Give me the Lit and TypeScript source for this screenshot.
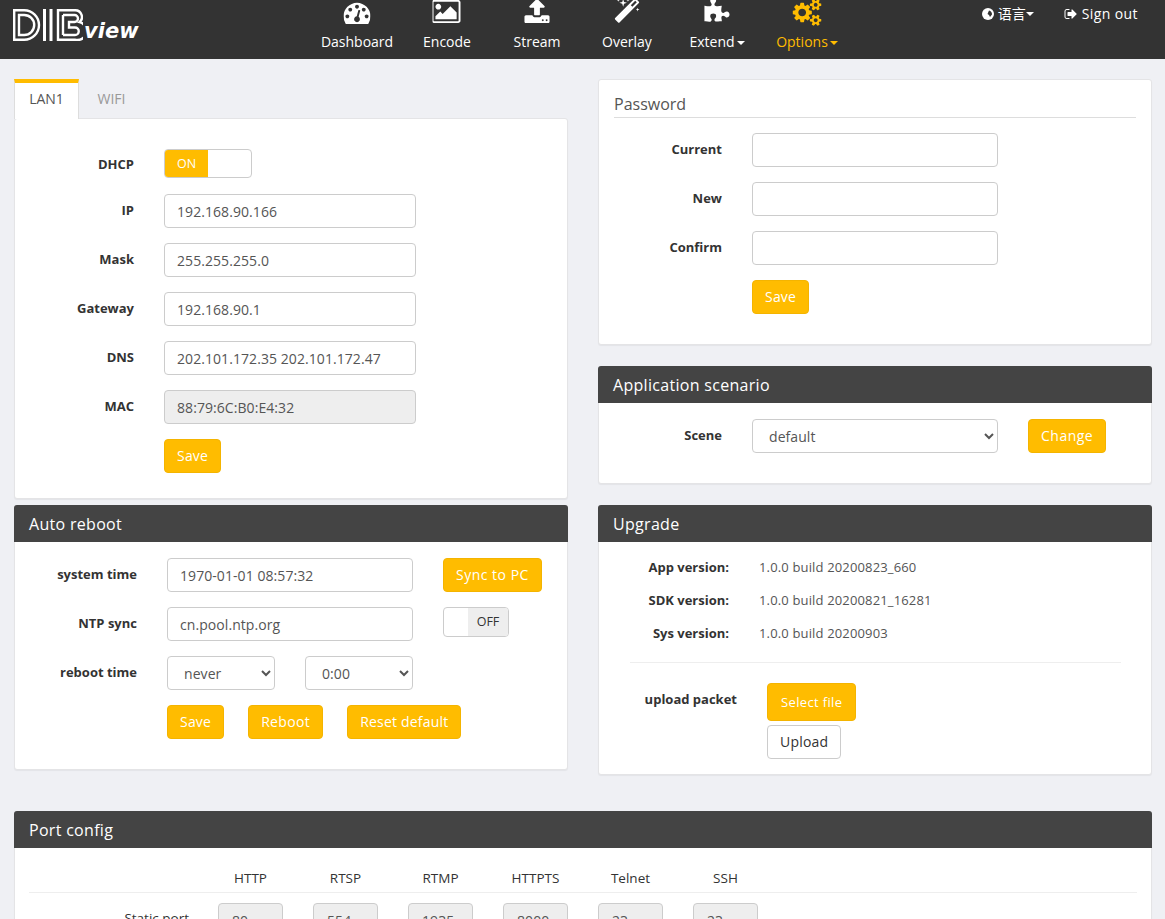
import {LitElement, css, html, svg} from 'lit';
import {customElement} from 'lit/decorators.js';

const ICONS = {
  dashboard: 'M384 1152q0-53-37.5-90.5t-90.5-37.5-90.5 37.5-37.5 90.5 37.5 90.5 90.5 37.5 90.5-37.5 37.5-90.5zm192-448q0-53-37.5-90.5t-90.5-37.5-90.5 37.5-37.5 90.5 37.5 90.5 90.5 37.5 90.5-37.5 37.5-90.5zm428 481l101-382q6-26-7.5-48.5t-38.5-29.5-48 6.5-30 39.5l-101 382q-60 5-107 43.5t-63 98.5q-20 77 20 146t117 89 146-20 89-117q16-60-6-117t-72-91zm660-33q0-53-37.5-90.5t-90.5-37.5-90.5 37.5-37.5 90.5 37.5 90.5 90.5 37.5 90.5-37.5 37.5-90.5zm-640-640q0-53-37.5-90.5t-90.5-37.5-90.5 37.5-37.5 90.5 37.5 90.5 90.5 37.5 90.5-37.5 37.5-90.5zm448 192q0-53-37.5-90.5t-90.5-37.5-90.5 37.5-37.5 90.5 37.5 90.5 90.5 37.5 90.5-37.5 37.5-90.5zm320 448q0 261-141 483-19 29-54 29h-1402q-35 0-54-29-141-221-141-483 0-182 71-348t191-286 286-191 348-71 348 71 286 191 191 286 71 348z',
  encode: 'M576 576q0 80-56 136t-136 56-136-56-56-136 56-136 136-56 136 56 56 136zm1024 384v448h-1408v-192l320-320 160 160 512-512zm96-704h-1600q-13 0-22.5 9.5t-9.5 22.5v1216q0 13 9.5 22.5t22.5 9.5h1600q13 0 22.5-9.5t9.5-22.5v-1216q0-13-9.5-22.5t-22.5-9.5zm160 32v1216q0 66-47 113t-113 47h-1600q-66 0-113-47t-47-113v-1216q0-66 47-113t113-47h1600q66 0 113 47t47 113z',
  stream: 'M1344 1472q0-26-19-45t-45-19-45 19-19 45 19 45 45 19 45-19 19-45zm256 0q0-26-19-45t-45-19-45 19-19 45 19 45 45 19 45-19 19-45zm128-224v320q0 40-28 68t-68 28h-1472q-40 0-68-28t-28-68v-320q0-40 28-68t68-28h427q21 56 70.5 92t110.5 36h256q61 0 110.5-36t70.5-92h427q40 0 68 28t28 68zm-325-648q-17 40-59 40h-256v448q0 26-19 45t-45 19h-256q-26 0-45-19t-19-45v-448h-256q-42 0-59-40-17-39 14-69l448-448q18-19 45-19t45 19l448 448q31 30 14 69z',
  overlay: 'M1254 581l293-293-107-107-293 293zm447-293q0 27-18 45l-1286 1286q-18 18-45 18t-45-18l-198-198q-18-18-18-45t18-45l1286-1286q18-18 45-18t45 18l198 198q18 18 18 45zm-1351-190l98 30-98 30-30 98-30-98-98-30 98-30 30-98zm350 162l196 60-196 60-60 196-60-196-196-60 196-60 60-196zm930 478l98 30-98 30-30 98-30-98-98-30 98-30 30-98zm-640-640l98 30-98 30-30 98-30-98-98-30 98-30 30-98z',
  extend: 'M1728 1098q0 81-44.5 135t-123.5 54q-41 0-77.5-17.5t-59-38-56.5-38-71-17.5q-110 0-110 124 0 39 16 115t15 115v5q-22 0-33 1-34 3-97.5 11.5t-115.5 13.5-98 5q-61 0-103-26.5t-42-83.5q0-37 17.5-71t38-56.5 38-59 17.5-77.5q0-79-54-123.5t-135-44.5q-84 0-143 45.5t-59 127.5q0 43 15 83t33.5 64.5 33.5 53 15 50.5q0 45-46 89-37 35-117 35-95 0-245-24-9-2-27.5-4t-27.5-4l-13-2q-2 0-4-.5t-3-.5v-1024q2 1 17.5 3.5t34 5 21.5 3.5q150 24 245 24 80 0 117-35 46-44 46-89 0-22-15-50.5t-33.5-53-33.5-64.5-15-83q0-82 59-127.5t144-45.5q80 0 134 44.5t54 123.5q0 41-17.5 77.5t-38 59-38 56.5-17.5 71q0 57 42 83.5t103 26.5q64 0 180-15t163-17v2q-1 2-3.5 17.5t-5 34-3.5 21.5q-24 150-24 245 0 80 35 117 44 46 89 46 22 0 50.5-15t53-33.5 64.5-33.5 83-15q82 0 127.5 59t45.5 143z',
  options: 'M896 896q0-106-75-181t-181-75-181 75-75 181 75 181 181 75 181-75 75-181zm768 512q0-52-38-90t-90-38-90 38-38 90q0 53 37.5 90.5t90.5 37.5 90.5-37.5 37.5-90.5zm0-1024q0-52-38-90t-90-38-90 38-38 90q0 53 37.5 90.5t90.5 37.5 90.5-37.5 37.5-90.5zm-384 421v185q0 10-7 19.5t-16 10.5l-155 24q-11 35-32 76 34 48 90 115 7 11 7 20 0 12-7 19-23 30-82.5 89.5t-78.5 59.5q-11 0-21-7l-115-90q-37 19-77 31-11 108-23 155-7 24-30 24h-186q-11 0-20-7.5t-10-17.5l-23-153q-34-10-75-31l-118 89q-7 7-20 7-11 0-21-8-144-133-144-160 0-9 7-19 10-14 41-53t47-61q-23-44-35-82l-152-24q-10-1-17-9.5t-7-19.5v-185q0-10 7-19.5t16-10.5l155-24q11-35 32-76-34-48-90-115-7-11-7-20 0-12 7-20 22-30 82-89t79-59q11 0 21 7l115 90q34-18 77-32 11-108 23-154 7-24 30-24h186q11 0 20 7.5t10 17.5l23 153q34 10 75 31l118-89q8-7 20-7 11 0 21 8 144 133 144 160 0 8-7 19-12 16-42 54t-45 60q23 48 34 82l152 23q10 2 17 10.5t7 19.5zm640 533v140q0 16-149 31-12 27-30 52 51 113 51 138 0 4-4 7-122 71-124 71-8 0-46-47t-52-68q-20 2-30 2t-30-2q-14 21-52 68t-46 47q-2 0-124-71-4-3-4-7 0-25 51-138-18-25-30-52-149-15-149-31v-140q0-16 149-31 13-29 30-52-51-113-51-138 0-4 4-7 4-2 35-20t59-34 30-16q8 0 46 46.5t52 67.5q20-2 30-2t30 2q51-71 92-112l6-2q4 0 124 70 4 3 4 7 0 25-51 138 17 23 30 52 149 15 149 31zm0-1024v140q0 16-149 31-12 27-30 52 51 113 51 138 0 4-4 7-122 71-124 71-8 0-46-47t-52-68q-20 2-30 2t-30-2q-14 21-52 68t-46 47q-2 0-124-71-4-3-4-7 0-25 51-138-18-25-30-52-149-15-149-31v-140q0-16 149-31 13-29 30-52-51-113-51-138 0-4 4-7 4-2 35-20t59-34 30-16q8 0 46 46.5t52 67.5q20-2 30-2t30 2q51-71 92-112l6-2q4 0 124 70 4 3 4 7 0 25-51 138 17 23 30 52 149 15 149 31z',
  signout: 'M704 1440q0 4 1 20t.5 26.5-3 23.5-10 19.5-20.5 6.5h-320q-119 0-203.5-84.5t-84.5-203.5v-704q0-119 84.5-203.5t203.5-84.5h320q13 0 22.5 9.5t9.5 22.5q0 4 1 20t.5 26.5-3 23.5-10 19.5-20.5 6.5h-320q-66 0-113 47t-47 113v704q0 66 47 113t113 47h312l11.5 1 11.5 3 8 5.5 7 9 2 13.5zm928-544q0 26-19 45l-544 544q-19 19-45 19t-45-19-19-45v-288h-448q-26 0-45-19t-19-45v-384q0-26 19-45t45-19h448v-288q0-26 19-45t45-19 45 19l544 544q19 19 19 45z',
};

const NAV = [
  {label: 'Dashboard', icon: ICONS.dashboard, vw: 1792, top: -1},
  {label: 'Encode', icon: ICONS.encode, vw: 1920, top: -2},
  {label: 'Stream', icon: ICONS.stream, vw: 1792, top: -2},
  {label: 'Overlay', icon: ICONS.overlay, vw: 1792, top: -2},
  {label: 'Extend', icon: ICONS.extend, vw: 1792, top: -2, caret: true},
  {label: 'Options', icon: ICONS.options, vw: 1920, top: -1, caret: true, active: true},
];

const PORTS = [
  ['HTTP', '80'], ['RTSP', '554'], ['RTMP', '1935'],
  ['HTTPTS', '8000'], ['Telnet', '23'], ['SSH', '23'],
];

const fa = (d: string, vw = 1792) => svg`
  <svg viewBox="0 0 ${vw} 1792" fill="currentColor"><path d=${d}></path></svg>`;

@customElement('app-root')
export class AppRoot extends LitElement {
  static styles = css`
    :host {
      display: block;
      height: 919px;
      overflow: hidden;
      background: #eff0f4;
      font-family: "Open Sans", "Noto Sans CJK SC", sans-serif;
      font-size: 14px;
      color: #333;
    }
    * { box-sizing: border-box; }

    header {
      display: flex;
      height: 59px;
      background: #333;
      color: #fff;
      overflow: hidden;
    }
    .logo {
      width: 312px;
      flex: none;
      display: flex;
      align-items: flex-start;
      padding: 9px 0 0 13px;
    }
    .logo svg { width: 70px; height: 32px; flex: none; }
    .logo span {
      font-family: "DejaVu Sans", sans-serif;
      font-style: italic;
      font-weight: 700;
      font-size: 21px;
      line-height: 22px;
      margin: 11px 0 0 1px;
    }
    nav { display: flex; }
    .item {
      width: 90px;
      display: flex;
      flex-direction: column;
      align-items: center;
    }
    .item.active { color: #ffbc00; }
    .icon { height: 32px; display: block; position: relative; width: 100%; }
    .icon svg { position: absolute; left: 50%; height: 27px; transform: translateX(-50%); }
    .item .text { line-height: 20px; white-space: nowrap; }
    .caret {
      display: inline-block;
      vertical-align: middle;
      margin-left: 2px;
      border-top: 4px solid currentColor;
      border-left: 4px solid transparent;
      border-right: 4px solid transparent;
    }
    .user {
      margin-left: auto;
      display: flex;
      gap: 30px;
      padding: 4px 27px 0 0;
      line-height: 20px;
    }
    .user div { display: flex; align-items: center; height: 20px; }
    .user svg { width: 14px; height: 14px; margin-right: 3px; }
    .user .caret { margin-left: 0; }
    .user .out { letter-spacing: .4px; }
    .user .out svg { margin-right: 4px; }

    .columns {
      display: grid;
      grid-template-columns: 554px 554px;
      column-gap: 30px;
      padding: 0 13px 0 14px;
    }
    .left, .right { padding-top: 20px; }

    .tabs { display: flex; height: 40px; margin-bottom: -1px; position: relative; }
    .tab {
      width: 65px;
      padding-top: 10px;
      text-align: center;
      line-height: 20px;
      color: #999;
    }
    .tab.on {
      background: #fff;
      color: #555;
      border-top: 4px solid #ffbc00;
      border-right: 1px solid #ddd;
      border-left: 1px solid #ddd;
      padding-top: 6px;
    }
    .panel {
      background: #fff;
      border: 1px solid #e4e4e6;
      border-radius: 3px;
      box-shadow: 0 1px 1px rgba(0, 0, 0, .05);
    }
    .heading {
      height: 37px;
      margin: -1px -1px 0;
      padding: 0 15px;
      background: #444;
      border-radius: 3px 3px 0 0;
      color: #fff;
      font-size: 16px;
      letter-spacing: .3px;
      line-height: 38px;
    }

    .row { display: flex; align-items: flex-start; margin-bottom: 15px; }
    .lbl {
      width: var(--lw);
      margin-right: 30px;
      flex: none;
      text-align: right;
      font-size: 13px;
      font-weight: 700;
      line-height: 32px;
      white-space: nowrap;
    }
    .field {
      display: block;
      height: 34px;
      padding: 0 12px;
      border: 1px solid #ccc;
      border-radius: 4px;
      background: #fff;
      font: inherit;
      letter-spacing: .07px;
      color: #555;
      outline: none;
    }
    .field.wide { width: 252px; }
    .field.mid { width: 246px; }
    .field[disabled] { background: #eee; }
    .btn {
      display: inline-block;
      height: 34px;
      padding: 0 12px;
      border: 1px solid #f4b400;
      border-radius: 4px;
      background: #ffbc00;
      color: #fff;
      font: inherit;
      letter-spacing: .2px;
      line-height: 32px;
    }
    .btn.w1 { letter-spacing: .35px; }
    .btn.w2 { letter-spacing: .5px; }
    .btn.plain { background: #fff; border-color: #ccc; color: #333; }

    .toggle {
      display: flex;
      border: 1px solid #ccc;
      border-radius: 4px;
      overflow: hidden;
      font-size: 12.5px;
    }
    .toggle b { font-weight: 400; text-align: center; }
    .toggle.on { width: 88px; height: 29px; line-height: 27px; }
    .toggle.on b { width: 43px; background: #ffbc00; color: #fff; }
    .toggle.off { width: 66px; height: 30px; line-height: 28px; }
    .toggle.off i { width: 24px; }
    .toggle.off b { flex: 1; background: #eee; color: #333; }

    .lan { --lw: 119px; padding: 30px 0 10px; }
    .lan .row.first { margin-bottom: 16px; }
    .lan .row.first .lbl { height: 29px; line-height: 31px; }

    .reboot { margin-top: 6px; --lw: 122px; }
    .reboot .body { padding: 16px 0 15px; }
    .reboot .after { margin-left: 30px; }
    .reboot .sel-a { width: 108px; }
    .reboot .sel-b { width: 108px; margin-left: 30px; }
    .reboot .btns { display: flex; gap: 24px; }

    .password { --lw: 123px; height: 266px; padding: 14px 15px 0; }
    .password .title {
      height: 24px;
      border-bottom: 1px solid #ddd;
      margin-bottom: 15px;
      font-size: 16px;
      line-height: 20px;
      color: #555;
    }
    .password .row { margin-left: -15px; }

    .scene { margin-top: 21px; --lw: 123px; height: 118px; }
    .scene .row { margin: 16px 0 0; }
    .scene .btn { margin-left: 30px; }

    .upgrade { margin-top: 21px; --lw: 130px; height: 270px; }
    .upgrade .info { padding: 10px 0 0; }
    .upgrade .row { margin-bottom: 3px; }
    .upgrade .lbl, .upgrade .val { line-height: 30px; }
    .upgrade .val { font-size: 13px; letter-spacing: .15px; color: #555; }
    .upgrade hr { margin: 14px 30px 20px 31px; border: 0; border-top: 1px solid #eee; }
    .upgrade .upload { --lw: 138px; }
    .upgrade .upload .lbl { line-height: 32px; }
    .upgrade .pick { display: flex; flex-direction: column; align-items: flex-start; gap: 4px; }
    .upgrade .pick .tall { height: 38px; line-height: 36px; padding: 0 13px; font-size: 13px; letter-spacing: .35px; }

    .ports { margin: 36px 13px 0 14px; }
    .ports .body { padding: 20px 14px 0; }
    .ports .head {
      display: flex;
      height: 25px;
      margin-bottom: 10px;
      padding: 0 0 6px 174px;
      border-bottom: 1px solid #eee;
      font-size: 13.500px;
      line-height: 20px;
    }
    .ports .head span { width: 95px; text-align: center; }
    .ports .row { margin: 0; }
    .ports .lbl2 {
      width: 160px;
      margin-right: 29px;
      flex: none;
      text-align: right;
      font-size: 13.500px;
      line-height: 30px;
    }
    .ports .cell { width: 65px; margin-right: 30px; padding: 0 13px; }
  `;

  field(label: string, value: string, disabled = false) {
    return html`<div class="row">
      <div class="lbl">${label}</div>
      <input class="field wide" .value=${value} ?disabled=${disabled}>
    </div>`;
  }

  renderHeader() {
    return html`<header>
      <div class="logo">
        <svg viewBox="0 0 70 32" fill="none" stroke="#fff" stroke-width="2.400">
          <path d="M1.200 1.200h10a14.800 14.800 0 0 1 0 29.600h-10z"></path>
          <path d="M6 6h5.200a10 10 0 0 1 0 20h-5.200z"></path>
          <path d="M31.500 0v32M38 0v32" stroke-width="3"></path>
          <path d="M45 1.200h17a6.800 6.800 0 0 1 4.500 12a8.800 8.800 0 0 1-4 17.600h-17.500z"></path>
          <path d="M50 6v20M50 6h11.500a3.500 3.500 0 0 1 0 7h-5.500v5.500h6a3.750 3.750 0 0 1 0 7.500h-12"></path>
        </svg>
        <span>view</span>
      </div>
      <nav>
        ${NAV.map(n => html`<div class="item ${n.active ? 'active' : ''}">
          <span class="icon">
            <svg style="top:${n.top}px;width:${27 * n.vw / 1792}px" viewBox="0 0 ${n.vw} 1792" fill="currentColor"><path d=${n.icon}></path></svg>
          </span>
          <span class="text">${n.label}${n.caret ? html`<span class="caret"></span>` : ''}</span>
        </div>`)}
      </nav>
      <div class="user">
        <div>
          <svg viewBox="0 0 14 14"><circle cx="7" cy="7" r="6" fill="#fff"></circle><path d="M8 3.500c2 .5 3 2 3 4l-2 2.500-1-2-1.500-1z" fill="#333"></path></svg>
          语言<span class="caret"></span>
        </div>
        <div class="out">${fa(ICONS.signout)}Sign out</div>
      </div>
    </header>`;
  }

  renderLan() {
    return html`
      <div class="tabs">
        <div class="tab on">LAN1</div>
        <div class="tab">WIFI</div>
      </div>
      <div class="panel lan">
        <div class="row first">
          <div class="lbl">DHCP</div>
          <div class="toggle on"><b>ON</b></div>
        </div>
        ${this.field('IP', '192.168.90.166')}
        ${this.field('Mask', '255.255.255.0')}
        ${this.field('Gateway', '192.168.90.1')}
        ${this.field('DNS', '202.101.172.35 202.101.172.47')}
        ${this.field('MAC', '88:79:6C:B0:E4:32', true)}
        <div class="row">
          <div class="lbl"></div>
          <div class="btn">Save</div>
        </div>
      </div>`;
  }

  renderReboot() {
    return html`<div class="panel reboot">
      <div class="heading">Auto reboot</div>
      <div class="body">
        <div class="row">
          <div class="lbl">system time</div>
          <input class="field mid" .value=${'1970-01-01 08:57:32'}>
          <div class="btn w2 after">Sync to PC</div>
        </div>
        <div class="row">
          <div class="lbl">NTP sync</div>
          <input class="field mid" .value=${'cn.pool.ntp.org'}>
          <div class="toggle off after"><i></i><b>OFF</b></div>
        </div>
        <div class="row">
          <div class="lbl">reboot time</div>
          <select class="field sel-a"><option>never</option></select>
          <select class="field sel-b"><option>0:00</option></select>
        </div>
        <div class="row">
          <div class="lbl"></div>
          <div class="btns">
            <div class="btn">Save</div>
            <div class="btn w1">Reboot</div>
            <div class="btn">Reset default</div>
          </div>
        </div>
      </div>
    </div>`;
  }

  renderRight() {
    return html`
      <div class="panel password">
        <div class="title">Password</div>
        ${['Current', 'New', 'Confirm'].map(l => html`<div class="row">
          <div class="lbl">${l}</div>
          <input class="field mid">
        </div>`)}
        <div class="row">
          <div class="lbl"></div>
          <div class="btn">Save</div>
        </div>
      </div>
      <div class="panel scene">
        <div class="heading">Application scenario</div>
        <div class="row">
          <div class="lbl">Scene</div>
          <select class="field mid"><option>default</option></select>
          <div class="btn w2">Change</div>
        </div>
      </div>
      <div class="panel upgrade">
        <div class="heading">Upgrade</div>
        <div class="info">
          ${[['App version:', '1.0.0 build 20200823_660'],
             ['SDK version:', '1.0.0 build 20200821_16281'],
             ['Sys version:', '1.0.0 build 20200903']].map(([k, v]) => html`<div class="row">
            <div class="lbl">${k}</div>
            <div class="val">${v}</div>
          </div>`)}
        </div>
        <hr>
        <div class="row upload">
          <div class="lbl">upload packet</div>
          <div class="pick">
            <div class="btn tall">Select file</div>
            <div class="btn plain">Upload</div>
          </div>
        </div>
      </div>`;
  }

  renderPorts() {
    return html`<div class="panel ports">
      <div class="heading">Port config</div>
      <div class="body">
        <div class="head">${PORTS.map(p => html`<span>${p[0]}</span>`)}</div>
        <div class="row">
          <div class="lbl2">Static port</div>
          ${PORTS.map(p => html`<input class="field cell" disabled .value=${p[1]}>`)}
        </div>
      </div>
    </div>`;
  }

  render() {
    return html`
      ${this.renderHeader()}
      <div class="columns">
        <div class="left">
          ${this.renderLan()}
          ${this.renderReboot()}
        </div>
        <div class="right">${this.renderRight()}</div>
      </div>
      ${this.renderPorts()}
    `;
  }
}
